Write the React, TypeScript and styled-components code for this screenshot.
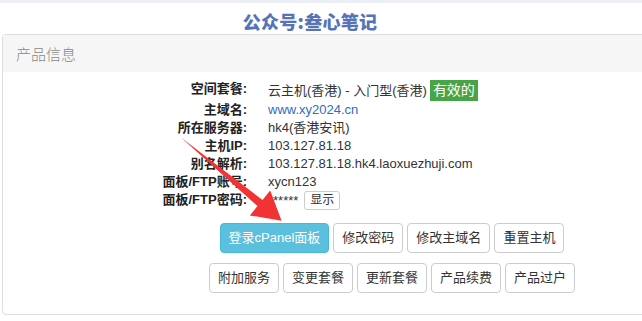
import React from "react";
import styled, { createGlobalStyle } from "styled-components";

const Global = createGlobalStyle`
  html, body { margin: 0; padding: 0; overflow: hidden; background: #fff; }
  body { font-family: "Liberation Sans", "Noto Sans CJK SC", sans-serif; color: #333; }
`;

const Page = styled.div`
  position: relative;
  width: 642px;
  height: 321px;
  border-top: 3px solid #eceff5;
  box-sizing: border-box;
`;

const TitleBar = styled.div`
  width: 620px;
  height: 26px;
  padding-top: 5px;
  line-height: 26px;
  text-align: center;
  font-family: "Noto Sans CJK SC", sans-serif;
  font-weight: 900;
  font-size: 18px;
  color: #5673b6;
  letter-spacing: 0.3px;
`;

const Panel = styled.div`
  margin-left: 2px;
  width: 780px;
  border: 1px solid #dddddd;
  border-radius: 4px;
  box-sizing: border-box;
  background: #fff;
`;

const PanelHeading = styled.div`
  height: 37px;
  padding: 0 13px;
  background: #f6f6f6;
  border-radius: 3px 3px 0 0;
  display: flex;
  align-items: center;
  font-family: "Noto Sans CJK SC", sans-serif;
  font-weight: 300;
  font-size: 15px;
  color: #888888;
`;

const PanelBody = styled.div`
  padding: 8px 0 21px;
`;

const InfoGrid = styled.div`
  display: grid;
  grid-template-columns: 244px 1fr;
  column-gap: 21px;
  font-size: 13px;
  line-height: 18px;
`;

const Label = styled.div`
  text-align: right;
  font-weight: bold;
  color: #222;
  white-space: nowrap;
`;

const Value = styled.div`
  display: flex;
  align-items: center;
  white-space: nowrap;
  color: #333;
`;

const Link = styled.a`
  color: #2f6dbd;
  text-decoration: none;
`;

const Badge = styled.span`
  display: inline-block;
  margin-left: 3px;
  padding: 2px 3px;
  line-height: 17px;
  font-size: 14px;
  background: #47a447;
  color: #fff;
`;

const SmallButton = styled.button`
  margin-left: 6px;
  height: 19px;
  padding: 0 5px;
  font-family: inherit;
  font-size: 12px;
  line-height: 17px;
  color: #333;
  background: #fff;
  border: 1px solid #ccc;
  border-radius: 3px;
`;

const Actions = styled.div`
  margin-top: 13px;
  display: flex;
  flex-direction: column;
  align-items: center;
  gap: 10px;
`;

const ActionRow = styled.div`
  display: flex;
  gap: 4px;
`;

const Btn = styled.button<{ $primary?: boolean }>`
  height: 30px;
  padding: 0 8px;
  font-family: inherit;
  font-size: 13px;
  line-height: 28px;
  white-space: nowrap;
  border-radius: 4px;
  border: 1px solid ${(p) => (p.$primary ? "#46b8da" : "#cccccc")};
  background: ${(p) => (p.$primary ? "#5bc0de" : "#ffffff")};
  color: ${(p) => (p.$primary ? "#ffffff" : "#333333")};
`;

const ArrowOverlay = styled.svg`
  position: absolute;
  left: 0;
  top: -3px;
  pointer-events: none;
`;

const rows: { label: string; value: React.ReactNode }[] = [
  {
    label: "空间套餐:",
    value: (
      <>
        云主机(香港) - 入门型(香港)<Badge>有效的</Badge>
      </>
    ),
  },
  { label: "主域名:", value: <Link href="#">www.xy2024.cn</Link> },
  { label: "所在服务器:", value: "hk4(香港安讯)" },
  { label: "主机IP:", value: "103.127.81.18" },
  { label: "别名解析:", value: "103.127.81.18.hk4.laoxuezhuji.com" },
  { label: "面板/FTP账号:", value: "xycn123" },
  {
    label: "面板/FTP密码:",
    value: (
      <>
        ******<SmallButton>显示</SmallButton>
      </>
    ),
  },
];

export default function App() {
  return (
    <>
      <Global />
      <Page>
        <TitleBar>公众号:叁心笔记</TitleBar>
        <Panel>
          <PanelHeading>产品信息</PanelHeading>
          <PanelBody>
            <InfoGrid>
              {rows.map((r) => (
                <React.Fragment key={r.label}>
                  <Label>{r.label}</Label>
                  <Value>{r.value}</Value>
                </React.Fragment>
              ))}
            </InfoGrid>
            <Actions>
              <ActionRow>
                <Btn $primary>登录cPanel面板</Btn>
                <Btn>修改密码</Btn>
                <Btn>修改主域名</Btn>
                <Btn>重置主机</Btn>
              </ActionRow>
              <ActionRow>
                <Btn>附加服务</Btn>
                <Btn>变更套餐</Btn>
                <Btn>更新套餐</Btn>
                <Btn>产品续费</Btn>
                <Btn>产品过户</Btn>
              </ActionRow>
            </Actions>
          </PanelBody>
        </Panel>
        <ArrowOverlay width="642" height="321" viewBox="0 0 642 321">
          <polygon
            points="181,137.5 262.5,199.9 270.2,190.6 281.6,220.8 249.8,215.4 257.5,206.1"
            fill="#f23333"
          />
        </ArrowOverlay>
      </Page>
    </>
  );
}
